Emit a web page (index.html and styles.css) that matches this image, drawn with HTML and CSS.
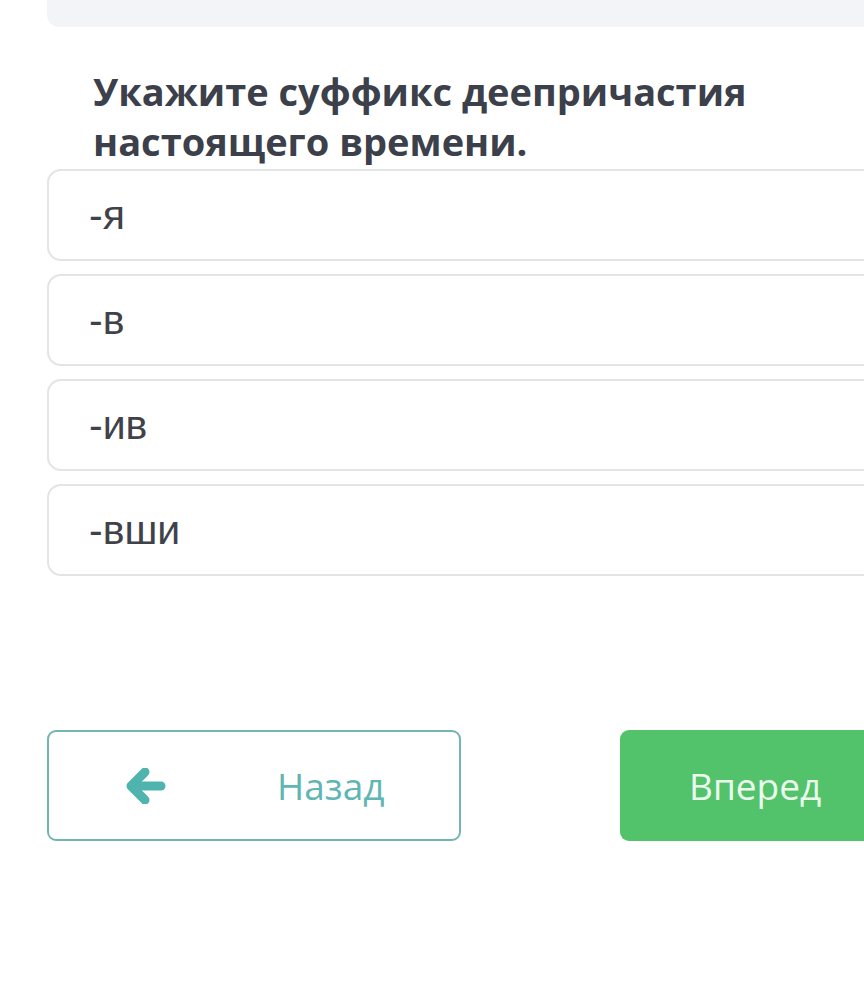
FILE: index.html
```html
<!DOCTYPE html>
<html lang="ru">
<head>
<meta charset="utf-8">
<link rel="stylesheet" href="styles.css">
</head>
<body>
<div class="page">
  <div class="top-panel"></div>
  <h1 class="question">Укажите суффикс деепричастия настоящего времени.</h1>
  <div class="options">
    <div class="option">-я</div>
    <div class="option">-в</div>
    <div class="option">-ив</div>
    <div class="option">-вши</div>
  </div>
  <div class="nav">
    <button class="btn btn-back">
      <svg class="arrow" viewBox="0 0 40 36" width="40" height="36"><path d="M19 4 L5 18 L19 32" fill="none" stroke="#4fb3ae" stroke-width="9" stroke-linecap="round" stroke-linejoin="round"/><path d="M7 18 H35" fill="none" stroke="#4fb3ae" stroke-width="9" stroke-linecap="round"/></svg>
      <span class="btn-label">Назад</span>
    </button>
    <button class="btn btn-next">Вперед</button>
  </div>
</div>
</body>
</html>
```
FILE: styles.css
```css
html, body {
  margin: 0;
  padding: 0;
  background: #ffffff;
  overflow: hidden;
}
.page {
  width: 990px;
  margin-left: 47px;
  font-family: "Open Sans", "Noto Sans", sans-serif;
}
.top-panel {
  height: 27px;
  background: #f3f4f7;
  border-radius: 0 0 12px 12px;
}
.question {
  margin: 39px 0 0 46px;
  font-size: 38px;
  line-height: 50px;
  font-weight: 700;
  color: #3b404b;
  width: 720px;
}
.options {
  margin-top: 3px;
  display: flex;
  flex-direction: column;
  gap: 13px;
}
.option {
  height: 92px;
  box-sizing: border-box;
  border: 2px solid #e3e4e6;
  border-radius: 14px;
  padding-left: 40px;
  display: flex;
  align-items: center;
  font-family: "Liberation Sans", Arial, sans-serif;
  font-size: 41px;
  line-height: 50px;
  color: #3f4349;
}
.nav {
  margin-top: 154px;
  display: flex;
  gap: 159px;
}
.btn {
  width: 414px;
  height: 111px;
  box-sizing: border-box;
  border-radius: 9px;
  font-family: "Open Sans", sans-serif;
  font-size: 37px;
  padding: 0;
  display: flex;
  align-items: center;
}
.btn-back {
  background: #ffffff;
  border: 2px solid #73b5b1;
  color: #5fb6b3;
}
.arrow {
  margin-left: 77px;
}
.btn-label {
  margin-left: 111px;
}
.btn-next {
  background: #52c26b;
  border: none;
  color: #eafbee;
  padding-left: 69px;
}
```
